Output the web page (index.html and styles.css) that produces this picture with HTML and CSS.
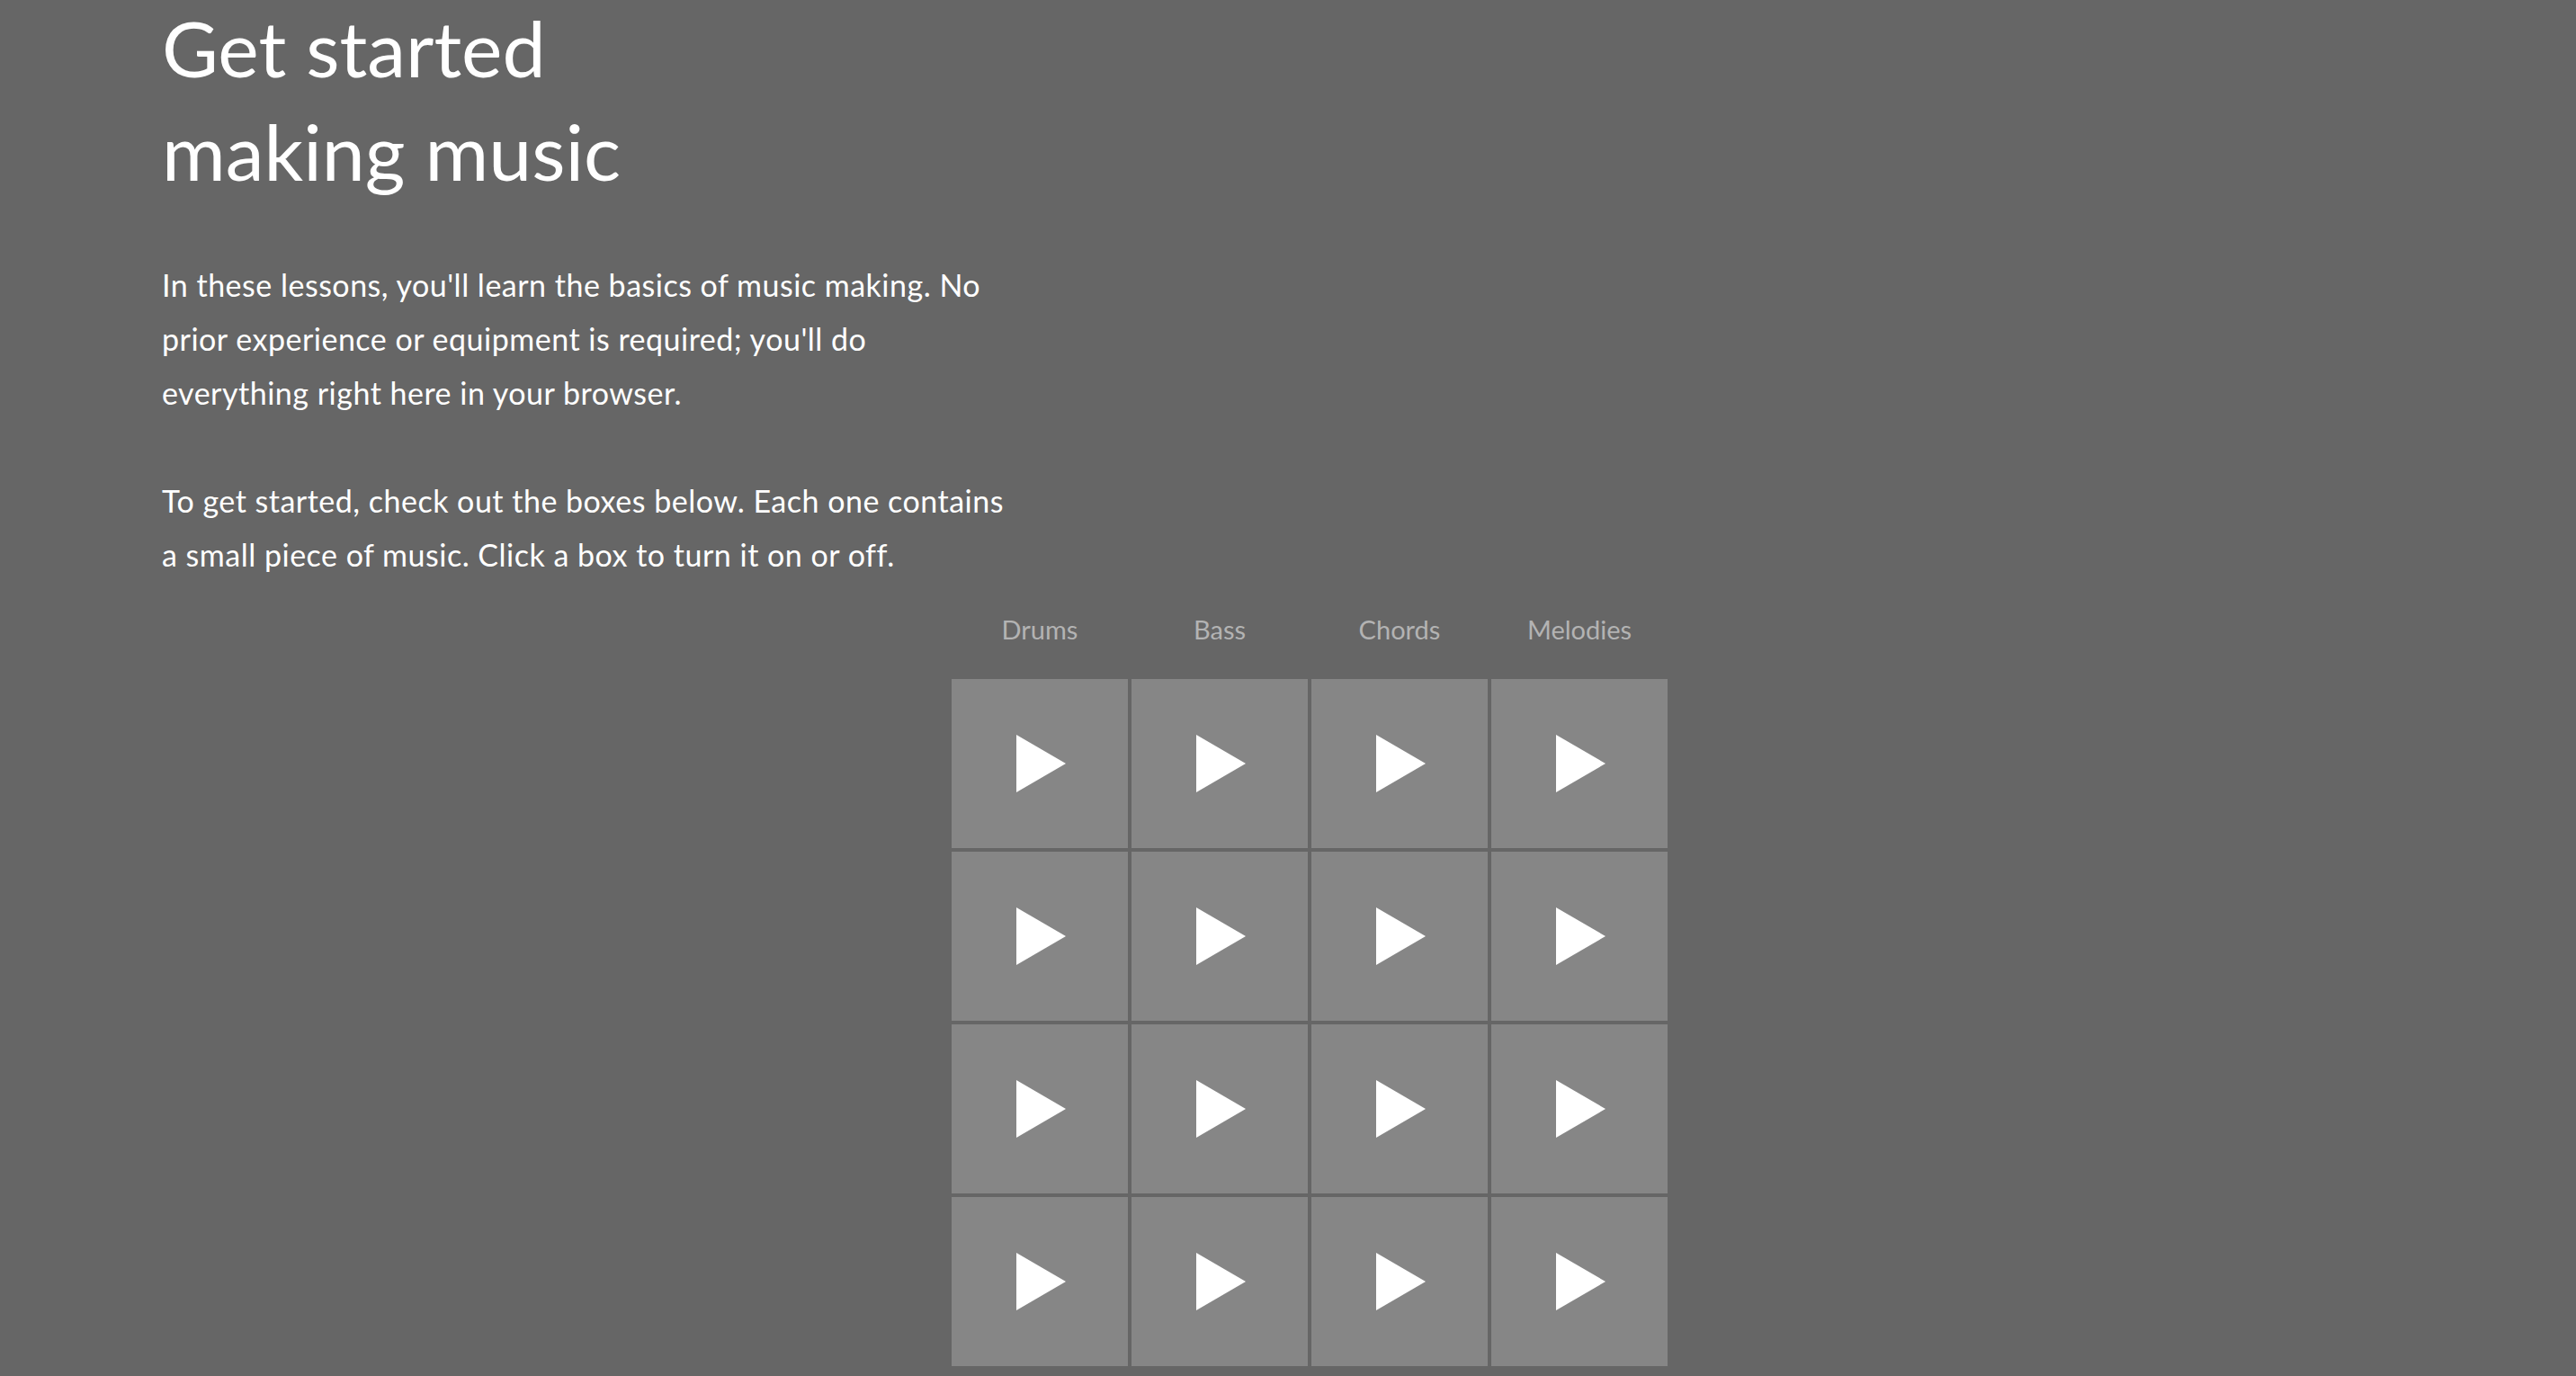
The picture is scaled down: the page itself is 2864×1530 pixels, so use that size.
FILE: index.html
```html
<!DOCTYPE html>
<html lang="en">
<head>
<meta charset="utf-8">
<title>Get started making music</title>
<link rel="stylesheet" href="styles.css">
</head>
<body>
<main class="page">
  <h1 class="title">Get started<br>making music</h1>
  <p class="intro">In these lessons, you'll learn the basics of music making. No prior experience or equipment is required; you'll do everything right here in your browser.</p>
  <p class="intro">To get started, check out the boxes below. Each one contains a small piece of music. Click a box to turn it on or off.</p>
  <section class="pads">
    <div class="pad-labels">
      <span class="pad-label">Drums</span>
      <span class="pad-label">Bass</span>
      <span class="pad-label">Chords</span>
      <span class="pad-label">Melodies</span>
    </div>
    <div class="pad-grid">
      <button class="pad"><svg class="play" viewBox="0 0 55 64"><polygon points="0,0 55,32 0,64"/></svg></button>
      <button class="pad"><svg class="play" viewBox="0 0 55 64"><polygon points="0,0 55,32 0,64"/></svg></button>
      <button class="pad"><svg class="play" viewBox="0 0 55 64"><polygon points="0,0 55,32 0,64"/></svg></button>
      <button class="pad"><svg class="play" viewBox="0 0 55 64"><polygon points="0,0 55,32 0,64"/></svg></button>
      <button class="pad"><svg class="play" viewBox="0 0 55 64"><polygon points="0,0 55,32 0,64"/></svg></button>
      <button class="pad"><svg class="play" viewBox="0 0 55 64"><polygon points="0,0 55,32 0,64"/></svg></button>
      <button class="pad"><svg class="play" viewBox="0 0 55 64"><polygon points="0,0 55,32 0,64"/></svg></button>
      <button class="pad"><svg class="play" viewBox="0 0 55 64"><polygon points="0,0 55,32 0,64"/></svg></button>
      <button class="pad"><svg class="play" viewBox="0 0 55 64"><polygon points="0,0 55,32 0,64"/></svg></button>
      <button class="pad"><svg class="play" viewBox="0 0 55 64"><polygon points="0,0 55,32 0,64"/></svg></button>
      <button class="pad"><svg class="play" viewBox="0 0 55 64"><polygon points="0,0 55,32 0,64"/></svg></button>
      <button class="pad"><svg class="play" viewBox="0 0 55 64"><polygon points="0,0 55,32 0,64"/></svg></button>
      <button class="pad"><svg class="play" viewBox="0 0 55 64"><polygon points="0,0 55,32 0,64"/></svg></button>
      <button class="pad"><svg class="play" viewBox="0 0 55 64"><polygon points="0,0 55,32 0,64"/></svg></button>
      <button class="pad"><svg class="play" viewBox="0 0 55 64"><polygon points="0,0 55,32 0,64"/></svg></button>
      <button class="pad"><svg class="play" viewBox="0 0 55 64"><polygon points="0,0 55,32 0,64"/></svg></button>
    </div>
  </section>
</main>
</body>
</html>
```

FILE: styles.css
```css
html, body {
  margin: 0;
  padding: 0;
  background: #666666;
}

body {
  font-family: Lato, "Noto Sans", sans-serif;
  color: #ffffff;
  overflow: hidden;
}

.page {
  padding: 0 0 0 180px;
}

.title {
  margin: -5px 0 0;
  font-size: 86px;
  line-height: 115px;
  font-weight: 400;
  letter-spacing: 0;
}

.intro {
  width: 945px;
  margin: 0;
  font-size: 34px;
  line-height: 60px;
  font-weight: 400;
  letter-spacing: 0.5px;
}

.title + .intro {
  margin-top: 62px;
}

.intro + .intro {
  margin-top: 60px;
}

.pads {
  margin-left: 878px;
  width: 796px;
}

.pad-labels {
  display: grid;
  grid-template-columns: repeat(4, 196px);
  column-gap: 4px;
  margin-top: 33px;
  height: 75px;
}

.pad-label {
  text-align: center;
  font-size: 29px;
  line-height: 40px;
  color: #b3b3b3;
}

.pad-grid {
  display: grid;
  grid-template-columns: repeat(4, 196px);
  grid-auto-rows: 188px;
  gap: 4px;
}

.pad {
  display: flex;
  align-items: center;
  justify-content: center;
  margin: 0;
  padding: 0 0 0 3px;
  border: 0;
  background: #868686;
  cursor: pointer;
}

.play {
  width: 55px;
  height: 64px;
  fill: #ffffff;
}
```
